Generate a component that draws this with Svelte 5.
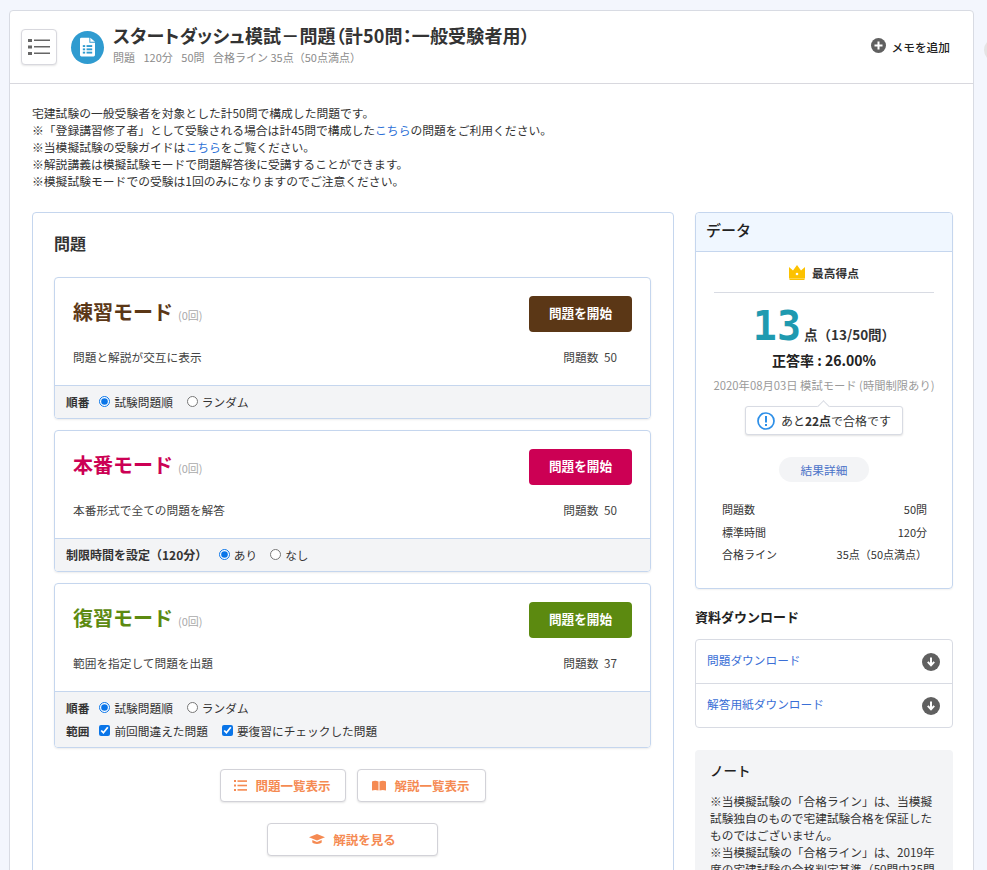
<script>
	const modes = [
		{ name: '練習モード', color: '#5b3716', desc: '問題と解説が交互に表示', count: 50 },
		{ name: '本番モード', color: '#cc0054', desc: '本番形式で全ての問題を解答', count: 50 },
		{ name: '復習モード', color: '#5c8a10', desc: '範囲を指定して問題を出題', count: 37 }
	];
</script>

<div class="page">
	<div class="edge-dot"></div>
	<div class="card">
		<header class="head">
			<button class="menu" aria-label="menu">
				<svg width="22" height="18" viewBox="0 0 22 18">
					<g fill="#666">
						<rect x="0" y="1" width="4" height="3" />
						<rect x="0" y="7.5" width="4" height="3" />
						<rect x="0" y="14" width="4" height="3" />
						<rect x="6" y="1.5" width="16" height="1.5" />
						<rect x="6" y="8" width="16" height="1.5" />
						<rect x="6" y="14.5" width="16" height="1.5" />
					</g>
				</svg>
			</button>
			<span class="doc-icon">
				<svg width="15" height="20" viewBox="0 0 16 20">
					<path d="M1.5 0H10v5.500h6V18.500A1.500 1.500 0 0 1 14.500 20H1.500A1.500 1.500 0 0 1 0 18.500V1.500A1.500 1.500 0 0 1 1.500 0zM11 0l5 4.500h-5z" fill="#fff" />
					<g fill="#2f9bd0">
						<rect x="3" y="8" width="2.500" height="2" />
						<rect x="7" y="8" width="6" height="2" />
						<rect x="3" y="11.500" width="2.500" height="2" />
						<rect x="7" y="11.500" width="6" height="2" />
						<rect x="3" y="15" width="2.500" height="2" />
						<rect x="7" y="15" width="6" height="2" />
					</g>
				</svg>
			</span>
			<div class="head-text">
				<h1>スタートダッシュ模試－問題（計50問：一般受験者用）</h1>
				<p><span>問題</span><span>120分</span><span>50問</span><span>合格ライン 35点（50点満点）</span></p>
			</div>
			<span class="memo">
				<svg width="15" height="15" viewBox="0 0 15 15">
					<circle cx="7.500" cy="7.500" r="7.500" fill="#606060" />
					<path d="M7.500 3.500v8M3.500 7.500h8" stroke="#fff" stroke-width="2" />
				</svg>
				メモを追加
			</span>
		</header>

		<div class="content">
			<div class="intro">
				宅建試験の一般受験者を対象とした計50問で構成した問題です。<br />
				※「登録講習修了者」として受験される場合は計45問で構成した<a href="#top">こちら</a>の問題をご利用ください。<br />
				※当模擬試験の受験ガイドは<a href="#top">こちら</a>をご覧ください。<br />
				※解説講義は模擬試験モードで問題解答後に受講することができます。<br />
				※模擬試験モードでの受験は1回のみになりますのでご注意ください。
			</div>

			<div class="columns">
				<section class="problems">
					<h2>問題</h2>
					{#each modes as mode, i}
						<div class="mode">
							<div class="mode-body">
								<div class="mode-top">
									<div class="mode-name">
										<strong style="color: {mode.color}">{mode.name}</strong>
										<small>(0回)</small>
									</div>
									<button class="start" style="background: {mode.color}">問題を開始</button>
								</div>
								<div class="mode-desc">
									<span>{mode.desc}</span>
									<span class="count">問題数 {mode.count}</span>
								</div>
							</div>
							<div class="mode-foot">
								{#if i === 1}
									<div class="opt-row tight">
										<b class="limit">制限時間を設定（120分）</b>
										<label><input type="radio" name="limit" checked />あり</label>
										<label><input type="radio" name="limit" />なし</label>
									</div>
								{:else}
									<div class="opt-row">
										<b>順番</b>
										<label><input type="radio" name={'order' + i} checked />試験問題順</label>
										<label><input type="radio" name={'order' + i} />ランダム</label>
									</div>
								{/if}
								{#if i === 2}
									<div class="opt-row second">
										<b>範囲</b>
										<label><input type="checkbox" checked />前回間違えた問題</label>
										<label><input type="checkbox" checked />要復習にチェックした問題</label>
									</div>
								{/if}
							</div>
						</div>
					{/each}

					<div class="actions">
						<button class="ghost w126">
							<svg width="13" height="11" viewBox="0 0 13 11" fill="#f58a52">
								<rect x="0" y="0" width="2" height="2" />
								<rect x="0" y="4.500" width="2" height="2" />
								<rect x="0" y="9" width="2" height="2" />
								<rect x="3.500" y="0.300" width="9.500" height="1.600" />
								<rect x="3.500" y="4.700" width="9.500" height="1.600" />
								<rect x="3.500" y="9.100" width="9.500" height="1.600" />
							</svg>
							問題一覧表示
						</button>
						<button class="ghost w129">
							<svg width="14" height="11" viewBox="0 0 14 11" fill="#f58a52">
								<path d="M0 1.500C2 .5 4.500.5 6.500 1.500V10.500C4.500 9.700 2 9.700 0 10.500zM7.500 1.500C9.500.5 12 .5 14 1.500V10.500C12 9.700 9.500 9.700 7.500 10.500z" />
							</svg>
							解説一覧表示
						</button>
					</div>
					<div class="actions lower">
						<button class="ghost w171">
							<svg width="16" height="11" viewBox="0 0 16 11" fill="#f58a52">
								<path d="M8 0l8 3.200L8 6.400 0 3.200zM3.300 6l4.700 1.900L12.700 6v2.600C11.500 10.300 4.500 10.300 3.300 8.600z" />
							</svg>
							解説を見る
						</button>
					</div>
				</section>

				<aside class="side">
					<div class="data">
						<div class="data-head">データ</div>
						<div class="data-body">
							<div class="best">
								<svg width="16" height="15" viewBox="0 0 16 15">
									<path d="M0 2l4 3.500L8 0l4 5.500L16 2v11.500H1 0z" fill="#fcc200" />
									<rect x="0.500" y="13.600" width="15" height="1.400" fill="#fcc200" />
									<circle cx="8" cy="9" r="1.300" fill="#fff" />
								</svg>
								最高得点
							</div>
							<div class="score">
								<span class="big">13</span>
								<b>点（13/50問）</b>
							</div>
							<div class="rate">正答率 : 26.00%</div>
							<div class="date">2020年08月03日 模試モード (時間制限あり)</div>
							<div class="tip">
								<svg width="18" height="18" viewBox="0 0 18 18">
									<circle cx="9" cy="9" r="8" fill="none" stroke="#2d8fe8" stroke-width="1.700" />
									<rect x="8" y="4" width="2" height="6.500" fill="#2d8fe8" />
									<rect x="8" y="12" width="2" height="2" fill="#2d8fe8" />
								</svg>
								<span>あと<b>22点</b>で合格です</span>
							</div>
							<a class="detail" href="#top">結果詳細</a>
							<dl>
								<div><dt>問題数</dt><dd>50問</dd></div>
								<div><dt>標準時間</dt><dd>120分</dd></div>
								<div><dt>合格ライン</dt><dd>35点（50点満点）</dd></div>
							</dl>
						</div>
					</div>

					<h3>資料ダウンロード</h3>
					<div class="downloads">
						{#each ['問題ダウンロード', '解答用紙ダウンロード'] as label}
							<a href="#top">
								<span>{label}</span>
								<svg width="18" height="18" viewBox="0 0 18 18">
									<circle cx="9" cy="9" r="9" fill="#606060" />
									<path d="M9 4.500v7M5.800 8.800L9 12.300l3.200-3.500" fill="none" stroke="#fff" stroke-width="2" />
								</svg>
							</a>
						{/each}
					</div>

					<div class="note">
						<h4>ノート</h4>
						<p>
							※当模擬試験の「合格ライン」は、当模擬試験独自のもので宅建試験合格を保証したものではございません。<br />
							※当模擬試験の「合格ライン」は、2019年度の宅建試験の合格判定基準（50問中35問以上正解）を参考にしています。
						</p>
					</div>
				</aside>
			</div>
		</div>
	</div>
</div>

<style>
	:global(body) {
		margin: 0;
		background: #f3f6fd;
	}

	.page {
		position: relative;
		height: 870px;
		overflow: hidden;
		padding: 10px 13px 0 9px;
		box-sizing: border-box;
		font-family: "Noto Sans CJK JP", "Liberation Sans", sans-serif;
		font-size: 11.7px;
		color: #333;
	}

	.edge-dot {
		position: absolute;
		left: 984px;
		top: 38px;
		width: 24px;
		height: 24px;
		border-radius: 50%;
		background: #e4e4e4;
	}

	.card {
		background: #fff;
		border: 1px solid #d8dbe3;
		border-radius: 4px;
	}

	.head {
		display: flex;
		align-items: center;
		height: 72px;
		padding: 0 23px 0 11px;
		border-bottom: 1px solid #d8d8de;
	}

	.menu {
		display: flex;
		align-items: center;
		justify-content: center;
		width: 36px;
		height: 36px;
		padding: 0;
		background: #fff;
		border: 1px solid #d8d8de;
		border-radius: 4px;
		box-shadow: 0 1px 2px rgba(0, 0, 0, 0.1);
	}

	.doc-icon {
		display: flex;
		align-items: center;
		justify-content: center;
		width: 33px;
		height: 33px;
		margin: 0 9px 0 14px;
		border-radius: 50%;
		background: #2f9bd0;
	}

	.head-text {
		flex: 1;
		padding-bottom: 6px;
	}

	h1 {
		margin: 0;
		font-size: 18px;
		line-height: 24px;
		font-weight: 700;
		color: #333;
		font-feature-settings: "palt";
		letter-spacing: 0.15px;
	}

	.head-text p {
		display: flex;
		gap: 8.500px;
		margin: 3px 0 0;
		font-size: 11px;
		line-height: 15px;
		color: #8b8b8b;
	}

	.memo {
		display: flex;
		align-items: center;
		gap: 6px;
		margin-top: -2px;
		font-weight: 500;
		color: #222;
	}

	.memo svg {
		margin-top: -2px;
	}

	.content {
		padding: 20px 20px 0 22px;
	}

	.intro {
		font-size: 11.8px;
		line-height: 17px;
		color: #333;
	}

	a {
		color: #2c6fd6;
		text-decoration: none;
	}

	.columns {
		display: flex;
		align-items: flex-start;
		gap: 21px;
		margin-top: 23px;
	}

	.problems {
		box-sizing: border-box;
		width: 643px;
		padding: 20px 22px 30px 21px;
		border: 1px solid #c5d6ee;
		border-radius: 4px;
	}

	h2 {
		margin: 0 0 23px;
		font-size: 16px;
		line-height: 21px;
		font-weight: 700;
		color: #333;
	}

	.mode {
		margin-bottom: 11px;
		border: 1px solid #c5d6ee;
		border-radius: 4px;
		overflow: hidden;
		box-shadow: 0 1px 2px rgba(0, 0, 0, 0.08);
	}

	.mode-body {
		padding: 18px 18px 0 18px;
		height: 89px;
	}

	.mode-top {
		display: flex;
		align-items: flex-start;
		justify-content: space-between;
	}

	.mode-name {
		display: flex;
		align-items: baseline;
		gap: 5px;
	}

	.mode-name strong {
		font-size: 20px;
		line-height: 32px;
		font-weight: 700;
	}

	.mode-name small {
		font-size: 11px;
		color: #aaa;
	}

	.start {
		width: 103px;
		height: 36px;
		padding: 0 0 3px;
		border: none;
		border-radius: 4px;
		color: #fff;
		font: 700 12.6px "Noto Sans CJK JP", sans-serif;
	}

	.mode-desc {
		display: flex;
		justify-content: space-between;
		margin-top: 16px;
		padding-right: 15px;
		line-height: 18px;
		color: #444;
	}

	.count {
		word-spacing: 3px;
	}

	.mode-foot {
		padding: 5px 11px 6px;
		background: #f3f4f6;
		border-top: 1px solid #c5d6ee;
	}

	.opt-row {
		display: flex;
		align-items: center;
		gap: 14px;
		height: 21px;
		color: #333;
	}

	.opt-row.tight {
		gap: 13px;
	}

	.opt-row.second {
		height: 22px;
		margin-top: 1px;
	}

	.opt-row b {
		font-weight: 700;
		margin-right: -4px;
	}

	.opt-row b.limit {
		font-size: 12px;
		margin-right: -1.500px;
	}

	label {
		display: flex;
		align-items: center;
	}

	input {
		width: 11px;
		height: 11px;
		margin: 0 4px 0 0;
		accent-color: #0a75e8;
	}

	.actions {
		display: flex;
		justify-content: center;
		gap: 11px;
		margin-top: 21px;
	}

	.actions.lower {
		margin-top: 21px;
	}

	.ghost {
		display: flex;
		align-items: center;
		justify-content: center;
		gap: 8px;
		height: 33px;
		padding: 0 0 1px;
		background: #fff;
		border: 1px solid #d2d2d8;
		border-radius: 4px;
		box-shadow: 0 1px 2px rgba(0, 0, 0, 0.1);
		color: #f58a52;
		font: 700 12.5px "Noto Sans CJK JP", sans-serif;
	}

	.w126 { width: 126px; }
	.w129 { width: 129px; }
	.w171 { width: 171px; }

	.side {
		width: 258px;
		flex: none;
	}

	.data {
		border: 1px solid #c5d6ee;
		border-radius: 4px;
		box-shadow: 0 1px 2px rgba(0, 0, 0, 0.06);
	}

	.data-head {
		height: 38px;
		padding-left: 10px;
		line-height: 34px;
		font-size: 15px;
		font-weight: 500;
		color: #222;
		background: #f0f7ff;
		border-bottom: 1px solid #c5d6ee;
		border-radius: 4px 4px 0 0;
	}

	.data-body {
		display: flex;
		flex-direction: column;
		align-items: center;
		height: 336px;
		padding: 0 18px;
	}

	.best {
		display: flex;
		align-items: center;
		justify-content: center;
		gap: 7px;
		width: 100%;
		height: 40px;
		font-weight: 700;
		font-size: 11.7px;
		color: #333;
		border-bottom: 1px solid #d8dbe3;
	}

	.score {
		display: flex;
		align-items: baseline;
		gap: 3px;
		height: 50px;
		margin-top: 8px;
	}

	.big {
		font-size: 40px;
		line-height: 50px;
		font-weight: 700;
		color: #1f9ab0;
		font-family: "DejaVu Sans Mono", "Liberation Mono", monospace;
	}

	.score b {
		font-size: 13.5px;
		font-weight: 700;
	}

	.rate {
		margin-top: -1px;
		font-size: 14px;
		line-height: 20px;
		font-weight: 700;
		color: #222;
	}

	.date {
		margin-top: 7px;
		font-size: 11.3px;
		line-height: 16px;
		color: #9a9a9a;
		white-space: nowrap;
	}

	.tip {
		position: relative;
		box-sizing: border-box;
		display: flex;
		align-items: center;
		justify-content: center;
		gap: 6px;
		width: 158px;
		height: 29px;
		margin-top: 13px;
		font-size: 12px;
		background: #fff;
		border: 1px solid #d8dbe3;
		border-radius: 3px;
		box-shadow: 0 1px 2px rgba(0, 0, 0, 0.12);
	}

	.tip::before {
		content: '';
		position: absolute;
		left: 73px;
		top: -5px;
		width: 8px;
		height: 8px;
		background: #fff;
		border: 1px solid #d8dbe3;
		border-right: none;
		border-bottom: none;
		transform: rotate(45deg);
	}

	.tip b {
		font-weight: 700;
	}

	.detail {
		display: block;
		width: 90px;
		height: 25px;
		margin-top: 22px;
		line-height: 25px;
		text-align: center;
		border-radius: 13px;
		background: #f3f4f6;
		color: #4a72c8;
	}

	dl {
		width: 100%;
		margin: 16px 0 0;
		padding: 0 7px 0 8px;
		box-sizing: border-box;
		font-size: 11px;
	}

	dl div {
		display: flex;
		justify-content: space-between;
		height: 22.500px;
		line-height: 22px;
	}

	dt, dd {
		margin: 0;
		color: #333;
	}

	h3 {
		margin: 18px 0 12px;
		font-size: 13px;
		line-height: 20px;
		font-weight: 700;
		color: #222;
	}

	.downloads {
		border: 1px solid #d8dbe3;
		border-radius: 4px;
	}

	.downloads a {
		display: flex;
		align-items: center;
		justify-content: space-between;
		height: 43px;
		padding: 0 12px 0 11px;
		color: #3b6fd6;
	}

	.downloads a span {
		margin-top: -4px;
	}

	.downloads a + a {
		border-top: 1px solid #d8dbe3;
	}

	.note {
		margin-top: 22px;
		padding: 9px 14px 16px 15px;
		background: #f3f4f6;
		border-radius: 4px;
	}

	h4 {
		margin: 0 0 11px;
		font-size: 13.5px;
		line-height: 22px;
		font-weight: 500;
		color: #222;
	}

	.note p {
		margin: 0;
		line-height: 17px;
		color: #333;
	}
</style>
